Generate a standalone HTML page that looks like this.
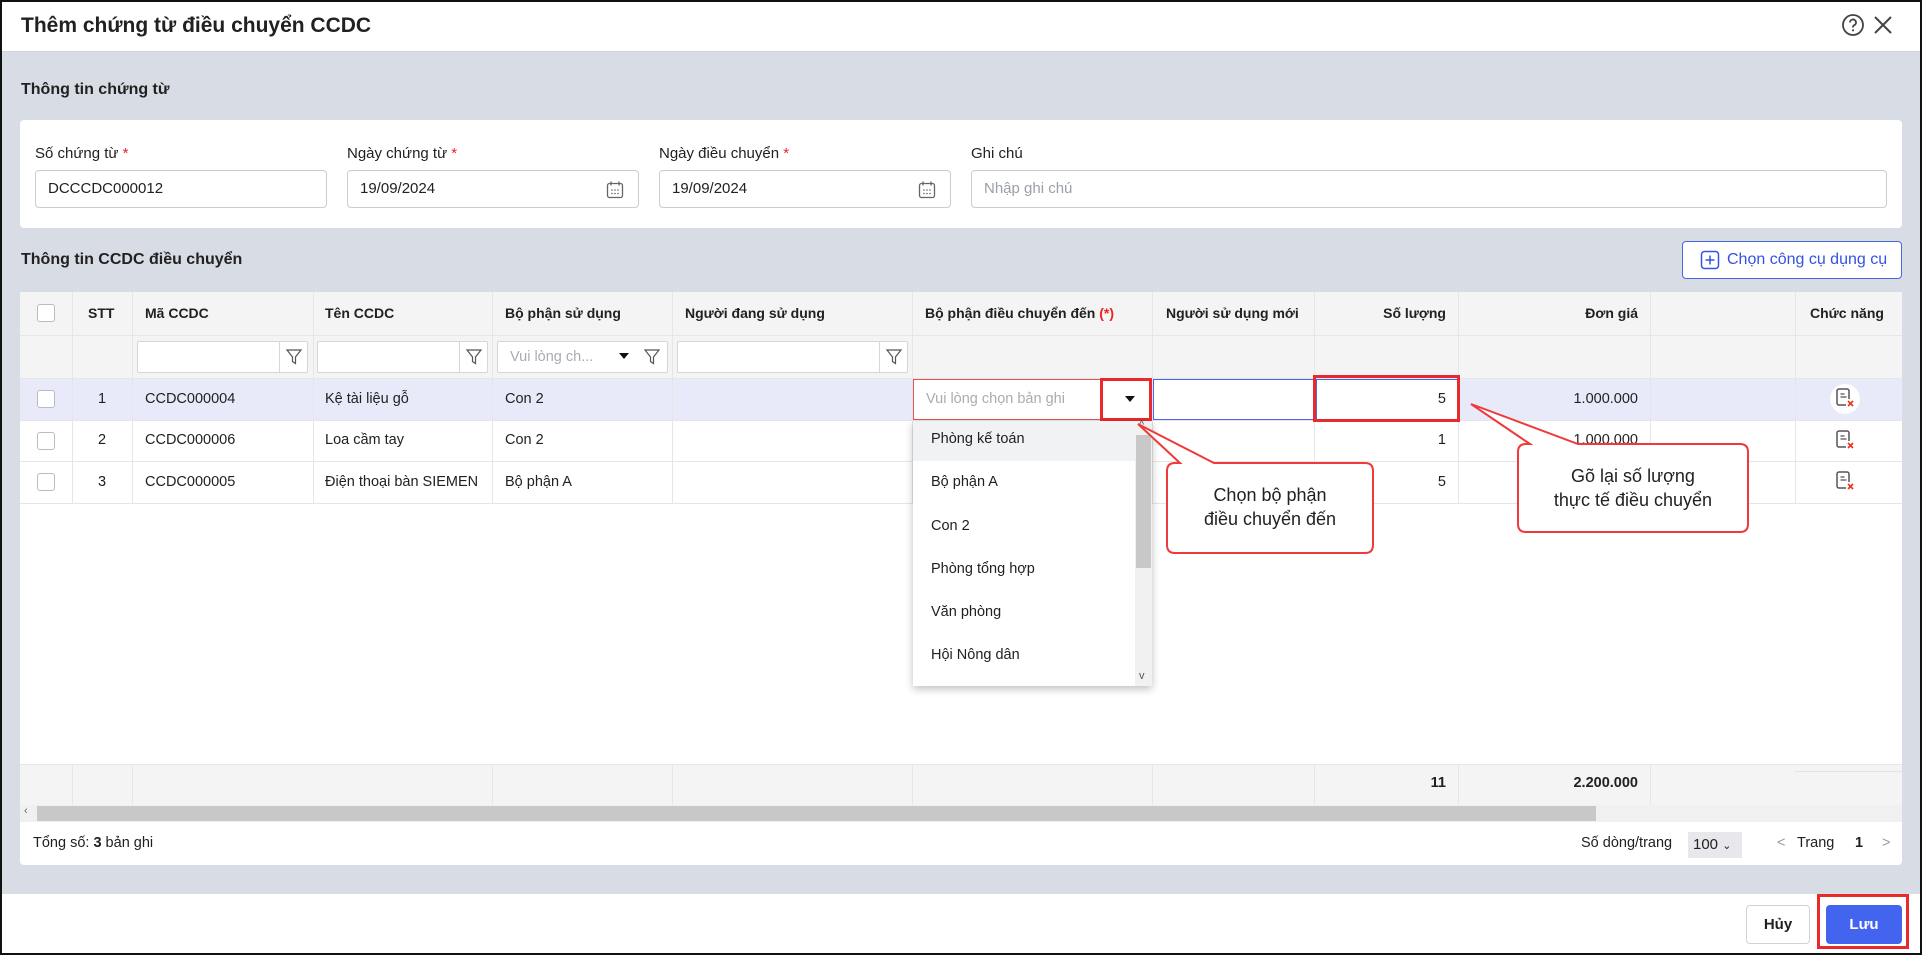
<!DOCTYPE html>
<html><head><meta charset="utf-8">
<style>
*{box-sizing:border-box;margin:0;padding:0}
body{width:1922px;height:955px;position:relative;overflow:hidden;font-family:"Liberation Sans",Arial,sans-serif;color:#212121;background:#fff;font-size:15px}
.a{position:absolute}
.frame{left:0;top:0;width:1922px;height:955px;border:2px solid #111;z-index:50;pointer-events:none}
.bg{left:0;top:51px;width:1922px;height:843px;background:#d8dde5;border-top:1px solid #cfd4dc}
.card{background:#fff;border-radius:4px}
.inp{border:1px solid #c9ccd2;border-radius:4px;background:#fff;height:38px;padding-left:12px;line-height:36px;font-size:15px}
.lbl{font-size:15px}
.req{color:#e22}
.cb{width:18px;height:18px;border:1px solid #b8bcc4;border-radius:3px;background:#fff}
.vl{width:1px;background:#e6e6e6}
.hl{height:1px;background:#e6e6e6}
.th{font-weight:bold;font-size:14px}
.fi{height:32px;border:1px solid #d4d6da;border-radius:2px;background:#fff}
.t{font-size:14.5px;white-space:nowrap}
</style></head><body>
<div class="a frame"></div>
<div class="a" style="left:21px;top:14px;font-size:21px;font-weight:bold">Thêm chứng từ điều chuyển CCDC</div>
<svg class="a" style="left:1841px;top:13px" width="24" height="24" viewBox="0 0 24 24"><circle cx="12" cy="12" r="10" fill="none" stroke="#444" stroke-width="1.8"/><path d="M9 9.5a3 3 0 1 1 4.2 2.7c-.8.4-1.2 1-1.2 1.8v.5" fill="none" stroke="#444" stroke-width="1.8"/><circle cx="12" cy="17.3" r="1.1" fill="#444"/></svg>
<svg class="a" style="left:1872px;top:14px" width="22" height="22" viewBox="0 0 22 22"><path d="M3 3L19 19M19 3L3 19" stroke="#444" stroke-width="2"/></svg>
<div class="a bg"></div>
<div class="a" style="left:21px;top:81px;font-weight:bold;font-size:16px">Thông tin chứng từ</div>
<div class="a card" style="left:20px;top:120px;width:1882px;height:108px"></div>
<div class="a lbl" style="left:35px;top:145px">Số chứng từ <span class="req">*</span></div>
<div class="a lbl" style="left:347px;top:145px">Ngày chứng từ <span class="req">*</span></div>
<div class="a lbl" style="left:659px;top:145px">Ngày điều chuyển <span class="req">*</span></div>
<div class="a lbl" style="left:971px;top:145px">Ghi chú</div>
<div class="a inp" style="left:35px;top:170px;width:292px">DCCCDC000012</div>
<div class="a inp" style="left:347px;top:170px;width:292px">19/09/2024</div>
<div class="a inp" style="left:659px;top:170px;width:292px">19/09/2024</div>
<div class="a inp" style="left:971px;top:170px;width:916px;color:#9a9ea6">Nhập ghi chú</div>
<svg class="a" style="left:605px;top:180px" width="20" height="20" viewBox="0 0 20 20"><rect x="2.5" y="3.5" width="15" height="14" rx="2" fill="none" stroke="#666" stroke-width="1.3"/><path d="M6 1.5v4M14 1.5v4" stroke="#666" stroke-width="1.3"/><g fill="#666"><circle cx="7" cy="10" r=".8"/><circle cx="10" cy="10" r=".8"/><circle cx="13" cy="10" r=".8"/><circle cx="7" cy="13.5" r=".8"/><circle cx="10" cy="13.5" r=".8"/><circle cx="13" cy="13.5" r=".8"/></g></svg>
<svg class="a" style="left:917px;top:180px" width="20" height="20" viewBox="0 0 20 20"><rect x="2.5" y="3.5" width="15" height="14" rx="2" fill="none" stroke="#666" stroke-width="1.3"/><path d="M6 1.5v4M14 1.5v4" stroke="#666" stroke-width="1.3"/><g fill="#666"><circle cx="7" cy="10" r=".8"/><circle cx="10" cy="10" r=".8"/><circle cx="13" cy="10" r=".8"/><circle cx="7" cy="13.5" r=".8"/><circle cx="10" cy="13.5" r=".8"/><circle cx="13" cy="13.5" r=".8"/></g></svg>

<div class="a" style="left:21px;top:251px;font-weight:bold;font-size:16px">Thông tin CCDC điều chuyển</div>
<div class="a" style="left:1682px;top:241px;width:220px;height:38px;border:1px solid #4a66e8;border-radius:4px;background:#fff;color:#3552e0;font-size:16px;line-height:36px;padding-left:44px">Chọn công cụ dụng cụ</div>
<svg class="a" style="left:1700px;top:250px" width="20" height="20" viewBox="0 0 20 20"><rect x="1.5" y="1.5" width="17" height="17" rx="3" fill="none" stroke="#3552e0" stroke-width="1.5"/><path d="M10 5.5v9M5.5 10h9" stroke="#3552e0" stroke-width="1.5"/></svg>

<div class="a card" style="left:20px;top:292px;width:1882px;height:573px;overflow:hidden"></div>
<div class="a" style="left:20px;top:292px;width:1882px;height:86px;background:#f4f4f4"></div>
<div class="a" style="left:20px;top:378px;width:1882px;height:42px;background:#e8eafa"></div>
<div class="a" style="left:20px;top:764px;width:1882px;height:41px;background:#f4f4f4"></div>
<div class="a hl" style="left:20px;top:335px;width:1882px"></div>
<div class="a hl" style="left:20px;top:378px;width:1882px"></div>
<div class="a hl" style="left:20px;top:420px;width:1882px"></div>
<div class="a hl" style="left:20px;top:461px;width:1882px"></div>
<div class="a hl" style="left:20px;top:503px;width:1882px"></div>
<div class="a hl" style="left:20px;top:764px;width:1882px"></div>
<div class="a vl" style="left:72px;top:292px;height:211px"></div>
<div class="a vl" style="left:132px;top:292px;height:211px"></div>
<div class="a vl" style="left:313px;top:292px;height:211px"></div>
<div class="a vl" style="left:492px;top:292px;height:211px"></div>
<div class="a vl" style="left:672px;top:292px;height:211px"></div>
<div class="a vl" style="left:912px;top:292px;height:211px"></div>
<div class="a vl" style="left:1152px;top:292px;height:211px"></div>
<div class="a vl" style="left:1314px;top:292px;height:211px"></div>
<div class="a vl" style="left:1458px;top:292px;height:211px"></div>
<div class="a vl" style="left:1650px;top:292px;height:211px"></div>
<div class="a vl" style="left:1795px;top:292px;height:211px"></div>
<div class="a vl" style="left:72px;top:764px;height:41px"></div>
<div class="a vl" style="left:132px;top:764px;height:41px"></div>
<div class="a vl" style="left:492px;top:764px;height:41px"></div>
<div class="a vl" style="left:672px;top:764px;height:41px"></div>
<div class="a vl" style="left:912px;top:764px;height:41px"></div>
<div class="a vl" style="left:1152px;top:764px;height:41px"></div>
<div class="a vl" style="left:1314px;top:764px;height:41px"></div>
<div class="a vl" style="left:1458px;top:764px;height:41px"></div>
<div class="a vl" style="left:1650px;top:764px;height:41px"></div>
<div class="a" style="left:1795px;top:771px;width:107px;height:40px;background:#f4f4f4;border-top:1px solid #e4e4e4"></div>
<div class="a cb" style="left:37px;top:304px"></div>
<div class="a th" style="left:88px;top:305px">STT</div>
<div class="a th" style="left:145px;top:305px">Mã CCDC</div>
<div class="a th" style="left:325px;top:305px">Tên CCDC</div>
<div class="a th" style="left:505px;top:305px">Bộ phận sử dụng</div>
<div class="a th" style="left:685px;top:305px">Người đang sử dụng</div>
<div class="a th" style="left:925px;top:305px">Bộ phận điều chuyển đến <span class="req">(*)</span></div>
<div class="a th" style="left:1166px;top:305px">Người sử dụng mới</div>
<div class="a th" style="left:1300px;top:305px;width:146px;text-align:right">Số lượng</div>
<div class="a th" style="left:1450px;top:305px;width:188px;text-align:right">Đơn giá</div>
<div class="a th" style="left:1810px;top:305px">Chức năng</div>
<div class="a fi" style="left:137px;top:341px;width:171px"></div>
<div class="a fi" style="left:317px;top:341px;width:171px"></div>
<div class="a fi" style="left:497px;top:341px;width:171px;color:#a8acb2;padding-left:12px;line-height:30px;font-size:14.5px">Vui lòng ch...</div>
<div class="a fi" style="left:677px;top:341px;width:231px"></div>
<div class="a vl" style="left:279px;top:342px;height:30px;background:#d4d6da"></div>
<div class="a vl" style="left:459px;top:342px;height:30px;background:#d4d6da"></div>
<div class="a vl" style="left:879px;top:342px;height:30px;background:#d4d6da"></div>
<svg class="a" style="left:285px;top:348px" width="18" height="18" viewBox="0 0 18 18"><path d="M2 2h14l-5.5 7v6.5l-3-2V9z" fill="none" stroke="#555" stroke-width="1.2"/></svg>
<svg class="a" style="left:465px;top:348px" width="18" height="18" viewBox="0 0 18 18"><path d="M2 2h14l-5.5 7v6.5l-3-2V9z" fill="none" stroke="#555" stroke-width="1.2"/></svg>
<svg class="a" style="left:643px;top:348px" width="18" height="18" viewBox="0 0 18 18"><path d="M2 2h14l-5.5 7v6.5l-3-2V9z" fill="none" stroke="#555" stroke-width="1.2"/></svg>
<svg class="a" style="left:885px;top:348px" width="18" height="18" viewBox="0 0 18 18"><path d="M2 2h14l-5.5 7v6.5l-3-2V9z" fill="none" stroke="#555" stroke-width="1.2"/></svg>
<svg class="a" style="left:619px;top:352px" width="10" height="8"><path d="M0 1h10L5 7z" fill="#111"/></svg>
<div class="a cb" style="left:37px;top:390px"></div>
<div class="a cb" style="left:37px;top:432px"></div>
<div class="a cb" style="left:37px;top:473px"></div>
<div class="a t" style="left:98px;top:391px">1</div>
<div class="a t" style="left:98px;top:432px">2</div>
<div class="a t" style="left:98px;top:474px">3</div>
<div class="a t" style="left:145px;top:391px">CCDC000004</div>
<div class="a t" style="left:145px;top:432px">CCDC000006</div>
<div class="a t" style="left:145px;top:474px">CCDC000005</div>
<div class="a t" style="left:325px;top:391px">Kệ tài liệu gỗ</div>
<div class="a t" style="left:325px;top:432px">Loa cầm tay</div>
<div class="a t" style="left:325px;top:474px">Điện thoại bàn SIEMEN</div>
<div class="a t" style="left:505px;top:391px">Con 2</div>
<div class="a t" style="left:505px;top:432px">Con 2</div>
<div class="a t" style="left:505px;top:474px">Bộ phận A</div>
<div class="a t" style="left:1300px;top:432px;width:146px;text-align:right">1</div>
<div class="a t" style="left:1300px;top:474px;width:146px;text-align:right">5</div>
<div class="a t" style="left:1450px;top:391px;width:188px;text-align:right">1.000.000</div>
<div class="a t" style="left:1450px;top:432px;width:188px;text-align:right">1.000.000</div>
<div class="a" style="left:913px;top:379px;width:239px;height:41px;background:#fff;border:1px solid #e05555;color:#a8acb2;padding-left:12px;line-height:39px;font-size:14.5px">Vui lòng chọn bản ghi</div>
<div class="a" style="left:1100px;top:378px;width:52px;height:43px;border:3px solid #e82a2a"></div>
<svg class="a" style="left:1125px;top:395px" width="10" height="8"><path d="M0 1h10L5 7z" fill="#111"/></svg>
<div class="a" style="left:1153px;top:379px;width:161px;height:41px;background:#fff;border:1px solid #4a66e8"></div>
<div class="a" style="left:1316px;top:379px;width:142px;height:41px;background:#fff;border:1px solid #4a66e8"></div>
<div class="a" style="left:1313px;top:375px;width:147px;height:47px;border:3px solid #e82a2a"></div>
<div class="a t" style="left:1300px;top:391px;width:146px;text-align:right">5</div>
<div class="a" style="left:1830px;top:384px;width:30px;height:30px;border-radius:50%;background:#fff"></div>
<svg class="a" style="left:1834px;top:386px" width="22" height="24" viewBox="0 0 22 24"><path d="M12 19H5a2 2 0 0 1-2-2V5a2 2 0 0 1 2-2h8a2 2 0 0 1 2 2v8" fill="none" stroke="#555" stroke-width="1.5"/><path d="M6.5 8h4M6.5 11h6" stroke="#555" stroke-width="1.3"/><path d="M14 15l5 5M19 15l-5 5" stroke="#e8341c" stroke-width="1.6"/></svg>
<svg class="a" style="left:1834px;top:428px" width="22" height="24" viewBox="0 0 22 24"><path d="M12 19H5a2 2 0 0 1-2-2V5a2 2 0 0 1 2-2h8a2 2 0 0 1 2 2v8" fill="none" stroke="#555" stroke-width="1.5"/><path d="M6.5 8h4M6.5 11h6" stroke="#555" stroke-width="1.3"/><path d="M14 15l5 5M19 15l-5 5" stroke="#e8341c" stroke-width="1.6"/></svg>
<svg class="a" style="left:1834px;top:469px" width="22" height="24" viewBox="0 0 22 24"><path d="M12 19H5a2 2 0 0 1-2-2V5a2 2 0 0 1 2-2h8a2 2 0 0 1 2 2v8" fill="none" stroke="#555" stroke-width="1.5"/><path d="M6.5 8h4M6.5 11h6" stroke="#555" stroke-width="1.3"/><path d="M14 15l5 5M19 15l-5 5" stroke="#e8341c" stroke-width="1.6"/></svg>
<div class="a t" style="left:1300px;top:775px;width:146px;text-align:right;font-weight:bold">11</div>
<div class="a t" style="left:1450px;top:775px;width:188px;text-align:right;font-weight:bold">2.200.000</div>
<div class="a" style="left:20px;top:805px;width:1882px;height:17px;background:#f0f0f0"></div>
<div class="a" style="left:37px;top:806px;width:1559px;height:15px;background:#c8c8c8"></div>
<div class="a" style="left:24px;top:805px;font-size:11px;color:#666">‹</div>
<div class="a t" style="left:33px;top:835px">Tổng số: <b>3</b> bản ghi</div>
<div class="a t" style="left:1581px;top:835px">Số dòng/trang</div>
<div class="a" style="left:1688px;top:832px;width:54px;height:26px;background:#e8e8ec;font-size:15px;line-height:26px;padding-left:5px">100 <span style="font-size:11px">⌄</span></div>
<div class="a t" style="left:1777px;top:835px;color:#999">&lt;</div>
<div class="a t" style="left:1797px;top:835px">Trang</div>
<div class="a t" style="left:1855px;top:835px;font-weight:bold">1</div>
<div class="a t" style="left:1882px;top:835px;color:#999">&gt;</div>
<div class="a" style="left:913px;top:421px;width:239px;height:265px;background:#fff;box-shadow:0 3px 8px rgba(0,0,0,.25)"></div>
<div class="a" style="left:913px;top:421px;width:222px;height:40px;background:#f1f2f4"></div>
<div class="a" style="left:1135px;top:421px;width:17px;height:265px;background:#f1f1f1"></div>
<div class="a" style="left:1136px;top:435px;width:15px;height:133px;background:#c8c8c8"></div>
<div class="a" style="left:1139px;top:419px;font-size:11px;color:#555">^</div>
<div class="a" style="left:1139px;top:670px;font-size:11px;color:#555">v</div>
<div class="a t" style="left:931px;top:431px">Phòng kế toán</div>
<div class="a t" style="left:931px;top:474px">Bộ phận A</div>
<div class="a t" style="left:931px;top:518px">Con 2</div>
<div class="a t" style="left:931px;top:561px">Phòng tổng hợp</div>
<div class="a t" style="left:931px;top:604px">Văn phòng</div>
<div class="a t" style="left:931px;top:647px">Hội Nông dân</div>
<svg class="a" style="left:0;top:0" width="1922" height="955">
<path d="M1180 463 L1138 424 L1214 463 L1365 463 Q1373 463 1373 471 L1373 545 Q1373 553 1365 553 L1175 553 Q1167 553 1167 545 L1167 471 Q1167 463 1175 463 Z" fill="#fff" stroke="#ee3a3a" stroke-width="2"/>
<path d="M1530 444 L1471 404 L1578 444 L1740 444 Q1748 444 1748 452 L1748 524 Q1748 532 1740 532 L1526 532 Q1518 532 1518 524 L1518 452 Q1518 444 1526 444 Z" fill="#fff" stroke="#ee3a3a" stroke-width="2"/>
</svg>
<div class="a" style="left:1167px;top:483px;width:206px;text-align:center;font-size:18px;line-height:24px">Chọn bộ phận<br>điều chuyển đến</div>
<div class="a" style="left:1518px;top:464px;width:230px;text-align:center;font-size:18px;line-height:24px">Gõ lại số lượng<br>thực tế điều chuyển</div>
<div class="a" style="left:1746px;top:905px;width:64px;height:39px;border:1px solid #cfd2d8;border-radius:4px;background:#fff;text-align:center;line-height:37px;font-weight:bold;font-size:15px">Hủy</div>
<div class="a" style="left:1826px;top:905px;width:76px;height:39px;border-radius:4px;background:#4264ee;color:#fff;text-align:center;line-height:39px;font-weight:bold;font-size:15px">Lưu</div>
<div class="a" style="left:1817px;top:894px;width:92px;height:55px;border:3px solid #e82a2a"></div>
</body></html>
